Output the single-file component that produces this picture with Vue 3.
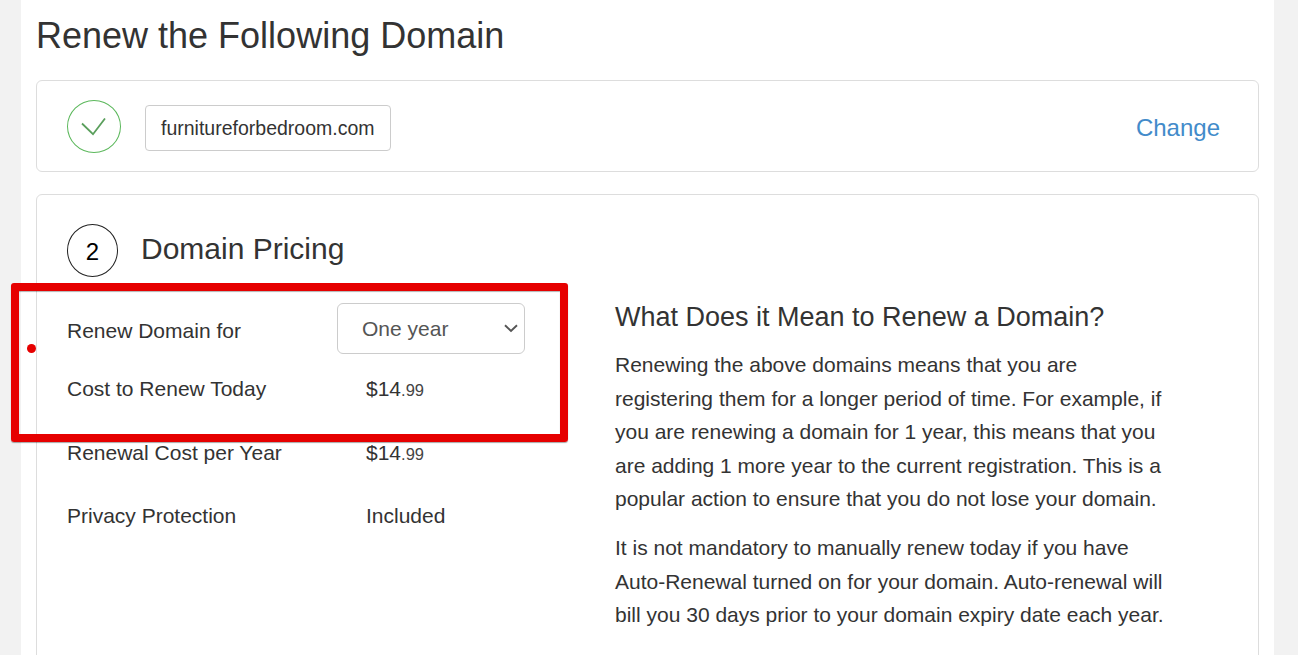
<script setup>
const rows = [
  { label: 'Cost to Renew Today', whole: '$14', cents: '.99' },
  { label: 'Renewal Cost per Year', whole: '$14', cents: '.99' },
  { label: 'Privacy Protection', whole: 'Included', cents: '' },
]
</script>

<template>
  <div class="page">
    <main class="sheet">
      <h1 class="title">Renew the Following Domain</h1>

      <section class="card domain-card">
        <span class="check">
          <svg width="26" height="18" viewBox="0 0 26 18" fill="none">
            <path d="M1 5.5 L12 16.2 L24 0.5" stroke="#5a9f5c" stroke-width="1.8" />
          </svg>
        </span>
        <span class="domain">furnitureforbedroom.com</span>
        <a class="change">Change</a>
      </section>

      <section class="card pricing-card">
        <div class="step-head">
          <span class="step"><span class="step-num">2</span></span>
          <h2 class="step-title">Domain Pricing</h2>
        </div>
        <div class="columns">
          <div class="price-col">
            <div class="row row-select">
              <span class="label">Renew Domain for</span>
              <span class="select">
                <span>One year</span>
                <svg width="14" height="9" viewBox="0 0 14 9" fill="none">
                  <path d="M1 1.2 L7 7 L13 1.2" stroke="#555" stroke-width="1.9" />
                </svg>
              </span>
            </div>
            <div v-for="row in rows" :key="row.label" class="row">
              <span class="label">{{ row.label }}</span>
              <span class="value">{{ row.whole }}<small v-if="row.cents">{{ row.cents }}</small></span>
            </div>
          </div>
          <div class="info-col">
            <h3 class="info-title">What Does it Mean to Renew a Domain?</h3>
            <p>Renewing the above domains means that you are<br>registering them for a longer period of time. For example, if<br>you are renewing a domain for 1 year, this means that you<br>are adding 1 more year to the current registration. This is a<br>popular action to ensure that you do not lose your domain.</p>
            <p>It is not mandatory to manually renew today if you have<br>Auto-Renewal turned on for your domain. Auto-renewal will<br>bill you 30 days prior to your domain expiry date each year.</p>
          </div>
        </div>
      </section>
    </main>
    <div class="annot-box"></div>
    <div class="annot-dot"></div>
  </div>
</template>

<style scoped>
.page {
  position: relative;
  height: 655px;
  overflow: hidden;
  padding: 0 24px 0 21px;
  background: #f2f2f2;
  font-family: "Liberation Sans", Arial, sans-serif;
  color: #333;
  box-sizing: border-box;
}
.sheet {
  background: #fff;
  height: 100%;
  padding: 0 15px;
}
.title {
  margin: 0;
  padding-top: 16px;
  height: 80px;
  box-sizing: border-box;
  font-size: 36px;
  line-height: 40px;
  font-weight: 400;
}
.card {
  border: 1px solid #ddd;
  border-radius: 6px;
  background: #fff;
  box-sizing: border-box;
}
.domain-card {
  height: 92px;
  display: flex;
  align-items: center;
  padding: 0 38px 0 30px;
}
.check {
  width: 54px;
  height: 53px;
  margin-top: 1px;
  box-sizing: border-box;
  border: 1px solid #5cb85c;
  border-radius: 50%;
  display: flex;
  align-items: center;
  justify-content: center;
  margin-right: 24px;
}
.domain {
  height: 46px;
  line-height: 44px;
  box-sizing: border-box;
  margin-top: 4px;
  padding: 0 15px;
  border: 1px solid #ccc;
  border-radius: 4px;
  font-size: 19.5px;
}
.change {
  margin-left: auto;
  margin-top: 4px;
  font-size: 24px;
  color: #428bca;
}
.pricing-card {
  margin-top: 22px;
  height: 600px;
  padding: 29px 30px 0;
}
.step-head {
  display: flex;
  align-items: center;
  height: 53px;
}
.step {
  width: 51px;
  height: 53px;
  box-sizing: border-box;
  border: 1px solid #222;
  border-radius: 50%;
  display: flex;
  align-items: center;
  justify-content: center;
  font-size: 24px;
  color: #000;
  margin-right: 23px;
}
.step-num {
  margin-top: 2px;
}
.step-title {
  margin: 0 0 4px;
  font-size: 30px;
  font-weight: 400;
  line-height: 48px;
}
.columns {
  display: flex;
}
.price-col {
  width: 548px;
  padding-top: 26px;
}
.row {
  display: flex;
  align-items: center;
  height: 64px;
  font-size: 21px;
}
.row:last-child {
  height: 62px;
}
.row-select {
  height: 51px;
  margin-bottom: 3px;
}
.label {
  width: 270px;
}
.row-select .label {
  padding-top: 5px;
}
.row:not(.row-select) .label {
  width: 299px;
}
.select {
  width: 188px;
  height: 51px;
  box-sizing: border-box;
  border: 1px solid #ccc;
  border-radius: 6px;
  padding: 0 6px 0 24px;
  display: flex;
  align-items: center;
  justify-content: space-between;
  color: #555;
}
.value small {
  font-size: 16.5px;
  color: #444;
}
.info-col {
  padding-top: 20px;
  font-size: 21px;
  line-height: 33.6px;
}
.info-title {
  margin: 0 0 11px;
  font-size: 27px;
  line-height: 40px;
  font-weight: 400;
}
.info-col p {
  margin: 0 0 15px;
}
.annot-box {
  position: absolute;
  left: 11px;
  top: 283px;
  width: 557px;
  height: 159px;
  box-sizing: border-box;
  border: 8px solid #e60000;
  border-radius: 3px;
  box-shadow: 0 1px 1px rgba(0, 0, 0, 0.35), inset 0 1px 1px rgba(0, 0, 0, 0.3);
}
.annot-dot {
  position: absolute;
  left: 27px;
  top: 344px;
  width: 9px;
  height: 9px;
  border-radius: 50%;
  background: #e60000;
}
</style>
